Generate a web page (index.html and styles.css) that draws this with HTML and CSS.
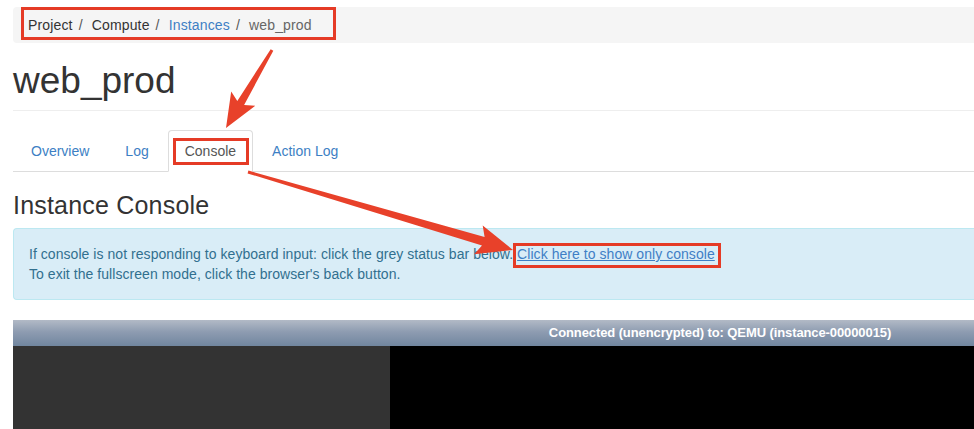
FILE: index.html
```html
<!DOCTYPE html>
<html>
<head>
<meta charset="utf-8">
<title>web_prod</title>
<link rel="stylesheet" href="styles.css">
</head>
<body>
<div class="page">
  <ol class="breadcrumb">
    <li>Project</li>
    <li>Compute</li>
    <li><a href="#">Instances</a></li>
    <li class="active">web_prod</li>
  </ol>
  <div class="page-header">
    <h1>web_prod</h1>
  </div>
  <ul class="nav-tabs">
    <li><a href="#">Overview</a></li>
    <li><a href="#">Log</a></li>
    <li class="active"><a href="#">Console</a></li>
    <li><a href="#">Action Log</a></li>
  </ul>
  <h3 class="section-title">Instance Console</h3>
  <div class="alert">
    <p>If console is not responding to keyboard input: click the grey status bar below. <a href="#">Click here to show only console</a></p>
    <p>To exit the fullscreen mode, click the browser's back button.</p>
  </div>
  <div class="console">
    <div class="console-inner">
      <div class="status-bar">Connected (unencrypted) to: QEMU (instance-00000015)</div>
      <div class="screen">
        <div class="screen-side"></div>
        <div class="screen-canvas"></div>
      </div>
    </div>
  </div>
</div>
<svg class="annotations" width="974" height="429" viewBox="0 0 974 429">
  <g fill="none" stroke="#e53b26" stroke-width="3">
    <rect x="22.5" y="8.5" width="312" height="30"/>
    <rect x="174.5" y="139.5" width="73" height="24"/>
    <rect x="514.5" y="244.5" width="205" height="22"/>
  </g>
  <g fill="#e8412a">
    <polygon points="270.7,49.2 237.3,101 231.2,91.6 226,128 255.3,105.8 244.1,105 273.3,50.8"/>
    <polygon points="247.6,173.4 482,245.5 474.2,254.2 513,250 482.7,225.4 484.6,236.9 248.4,170.6"/>
  </g>
</svg>
</body>
</html>
```

FILE: styles.css
```css
html, body {
  margin: 0;
  padding: 0;
  overflow: hidden;
  background: #fff;
}

body {
  font-family: "Liberation Sans", Arial, sans-serif;
  font-size: 14px;
  line-height: 20px;
  color: #333;
  width: 974px;
  height: 429px;
  position: relative;
}

a {
  color: #3d7fc4;
  text-decoration: none;
}

.page {
  padding: 7px 0 0 13px;
}

.breadcrumb {
  list-style: none;
  margin: 0;
  padding: 8px 15px;
  background: #f5f5f5;
  border-radius: 4px 0 0 4px;
  display: flex;
  letter-spacing: 0.15px;
}

.breadcrumb li {
  color: #333;
}

.breadcrumb li + li::before {
  content: "/\00a0";
  padding: 0 5px 0 6px;
  color: #555;
}

.breadcrumb li.active {
  color: #666;
}

.page-header {
  border-bottom: 1px solid #eee;
  padding-bottom: 9px;
  margin-top: 18px;
}

.page-header h1 {
  margin: 0;
  font-size: 37px;
  line-height: 40px;
  font-weight: 500;
  color: #333;
}

.nav-tabs {
  list-style: none;
  margin: 19px 0 0 0;
  padding: 0 0 0 1px;
  display: flex;
  border-bottom: 1px solid #ddd;
}

.nav-tabs li {
  margin-bottom: -1px;
}

.nav-tabs a {
  display: block;
  padding: 10px 16px;
  margin-right: 2px;
  line-height: 20px;
  border: 1px solid transparent;
  border-radius: 4px 4px 0 0;
  color: #3d7fc4;
}

.nav-tabs li.active a {
  color: #555;
  background: #fff;
  border-color: #ddd #ddd transparent;
}

.section-title {
  margin: 20px 0 10px;
  font-size: 25px;
  line-height: 26px;
  font-weight: 500;
  letter-spacing: 0.2px;
  color: #333;
}

.alert {
  padding: 15px;
  border: 1px solid #bce8f1;
  border-right: none;
  border-radius: 4px 0 0 4px;
  background: #d9edf7;
  color: #31708f;
  letter-spacing: 0.05px;
}

.alert p {
  margin: 0;
}

.alert a {
  color: #3f7fc6;
  text-decoration: underline;
}

.console {
  margin-top: 20px;
  overflow: hidden;
}

.console-inner {
  width: 1414px;
}

.status-bar {
  height: 26px;
  line-height: 26px;
  text-align: center;
  font-size: 13px;
  font-weight: bold;
  letter-spacing: -0.1px;
  color: #fff;
  background: linear-gradient(#b2bac6, #8e9cb1 45%, #71869f);
}

.screen {
  display: flex;
  height: 120px;
}

.screen-side {
  width: 377px;
  background: #333;
}

.screen-canvas {
  flex: 1;
  background: #000;
}

.annotations {
  position: absolute;
  left: 0;
  top: 0;
  pointer-events: none;
}
```
